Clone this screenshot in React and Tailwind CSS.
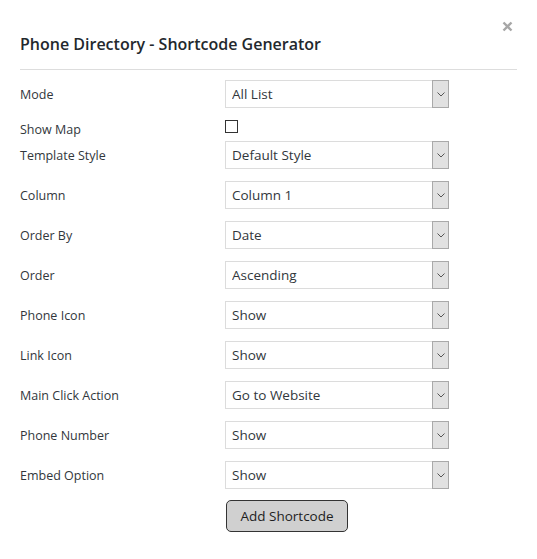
const font = { fontFamily: '"Open Sans", "Noto Sans", sans-serif' }

const rows = [
  ["Template Style", "Default Style"],
  ["Column", "Column 1"],
  ["Order By", "Date"],
  ["Order", "Ascending"],
  ["Phone Icon", "Show"],
  ["Link Icon", "Show"],
  ["Main Click Action", "Go to Website"],
  ["Phone Number", "Show"],
  ["Embed Option", "Show"],
]

function Select({ value }) {
  return (
    <div className="relative w-[224px] h-[28px]">
      <select
        defaultValue={value}
        className="appearance-none w-full h-full border border-[#dcdcdc] bg-white pl-[6px] text-[13.5px] text-[#32373c] outline-none"
      >
        <option>{value}</option>
      </select>
      <div className="absolute right-0 top-0 h-full w-[17px] bg-[#e1e1e1] border border-[#a9a9a9] flex items-center justify-center pointer-events-none">
        <svg width="8" height="5" viewBox="0 0 8 5">
          <path d="M0.5 0.5 L4 4 L7.5 0.5" fill="none" stroke="#555" strokeWidth="1" />
        </svg>
      </div>
    </div>
  )
}

export default function App() {
  return (
    <div className="bg-white w-[537px] h-[559px] relative text-[#23282d]" style={font}>

      {/* close */}
      <button className="absolute left-[502px] top-[21px] w-[11px] h-[11px]">
        <svg width="11" height="11" viewBox="0 0 11 11">
          <path d="M1.5 1.5 L9.5 9.5 M9.5 1.5 L1.5 9.5" stroke="#a7a7a7" strokeWidth="2.4" />
        </svg>
      </button>

      <div className="px-[20px]">
        <h1 className="pt-[32px] pb-[13px] text-[16px] font-semibold leading-[24px] border-b border-[#dddddd]">
          Phone Directory - Shortcode Generator
        </h1>

        <div className="flex flex-col text-[12.5px] text-[#32373c]">

          <div className="flex items-center mt-[10px]">
            <span className="w-[205px] pt-[2px]">Mode</span>
            <Select value="All List" />
          </div>

          <div className="flex items-start mt-[12px] h-[13px]">
            <span className="w-[205px] leading-[20px]">Show Map</span>
            <input type="checkbox" className="appearance-none w-[13px] h-[13px] border border-[#333] bg-white m-0" />
          </div>

          {rows.map(([label, value], i) => (
            <div key={label} className={i === 0 ? "flex items-center mt-[8px]" : "flex items-center mt-[12px]"}>
              <span className="w-[205px] pt-[2px]">{label}</span>
              <Select value={value} />
            </div>
          ))}

          <div className="pl-[206px] mt-[11px]">
            <button className="w-[122px] h-[32px] bg-[#d0d0d0] border border-[#333] rounded-[5px] text-[13.5px] text-[#1e1e1e]">
              Add Shortcode
            </button>
          </div>

        </div>
      </div>
    </div>
  )
}
